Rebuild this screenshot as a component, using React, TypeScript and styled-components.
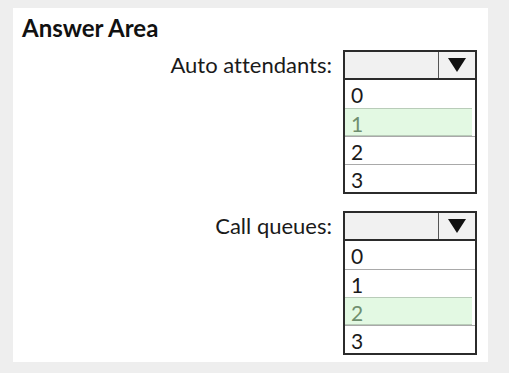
import React from 'react';
import styled, { createGlobalStyle } from 'styled-components';

const GlobalStyle = createGlobalStyle`
  html, body {
    margin: 0;
    padding: 0;
    background: #eeeeee;
  }
  body {
    font-family: Lato, "Open Sans", sans-serif;
    font-variant-ligatures: none;
    color: #111;
  }
`;

const Page = styled.div`
  width: 509px;
  height: 373px;
  padding: 8px 21px 11px 13px;
  box-sizing: border-box;
`;

const Panel = styled.div`
  background: #fff;
  width: 475px;
  height: 354px;
  box-sizing: border-box;
  padding: 5px 11px 0 9px;
`;

const Title = styled.h1`
  margin: 0;
  font-size: 24px;
  font-weight: 700;
  line-height: 30px;
  color: #111;
`;

const Grid = styled.div`
  display: grid;
  grid-template-columns: 1fr 134px;
  column-gap: 11px;
  row-gap: 17px;
  margin-top: 7px;
`;

const Label = styled.div`
  text-align: right;
  font-size: 22px;
  line-height: 30px;
  color: #1a1a1a;
`;

const Select = styled.div`
  border: 2px solid #2b2b2b;
  box-sizing: border-box;
`;

const Head = styled.div`
  display: flex;
  height: 26px;
  background: #f1f1f1;
  border-bottom: 2px solid #2b2b2b;
`;

const HeadField = styled.div`
  flex: 1;
  border-right: 1px solid #555;
`;

const ArrowCell = styled.div`
  width: 36px;
  display: flex;
  align-items: center;
  justify-content: center;
`;

const Option = styled.div<{ $selected?: boolean }>`
  height: 28px;
  box-sizing: border-box;
  padding-left: 6px;
  font-size: 21px;
  line-height: 30px;
  color: ${(p) => (p.$selected ? '#6f8f6f' : '#1a1a1a')};
  background: ${(p) => (p.$selected ? '#e3f9e3' : '#fff')};
  border-top: 1px solid ${(p) => (p.$selected ? '#b9ccb9' : '#a9a9a9')};
  border-bottom: ${(p) => (p.$selected ? '1px solid #b9ccb9' : 'none')};
  margin-right: ${(p) => (p.$selected ? '3px' : '0')};
  &:first-of-type {
    border-top: none;
  }
`;

const Arrow = () => (
  <svg width="18" height="14" viewBox="0 0 18 14">
    <polygon points="0,0 18,0 9,14" fill="#111" />
  </svg>
);

const Dropdown: React.FC<{ options: string[]; selected: number }> = ({ options, selected }) => (
  <Select>
    <Head>
      <HeadField />
      <ArrowCell>
        <Arrow />
      </ArrowCell>
    </Head>
    <div>
      {options.map((o, i) => (
        <Option key={o} $selected={i === selected}>
          {o}
        </Option>
      ))}
    </div>
  </Select>
);

const App: React.FC = () => {
  const opts = ['0', '1', '2', '3'];
  return (
    <>
      <GlobalStyle />
      <Page>
        <Panel>
          <Title>Answer Area</Title>
          <Grid>
            <Label>Auto attendants:</Label>
            <Dropdown options={opts} selected={1} />
            <Label>Call queues:</Label>
            <Dropdown options={opts} selected={2} />
          </Grid>
        </Panel>
      </Page>
    </>
  );
};

export default App;
